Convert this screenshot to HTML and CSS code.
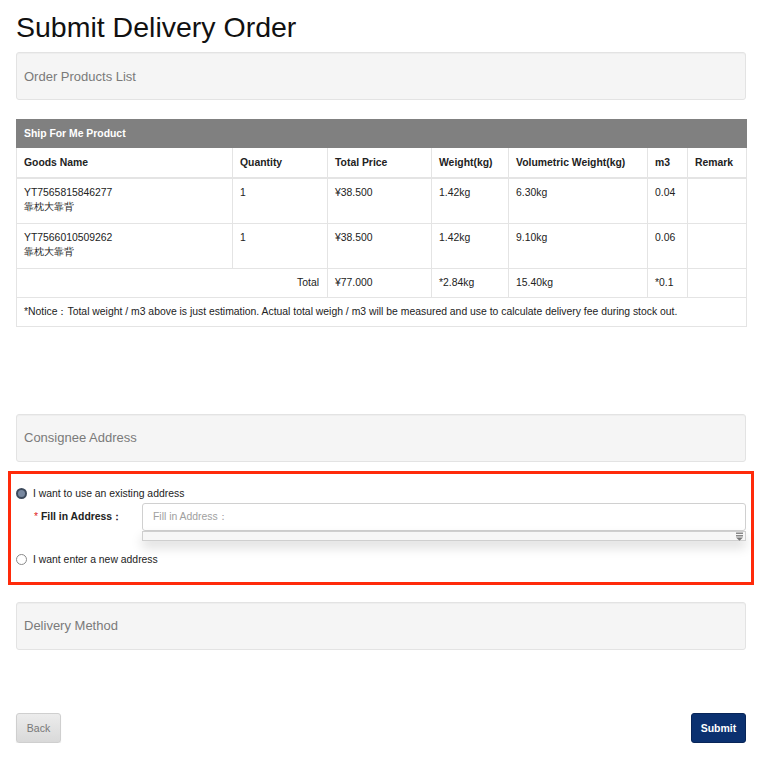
FILE: index.html
```html
<!DOCTYPE html>
<html>
<head>
<meta charset="utf-8">
<title>Submit Delivery Order</title>
<link rel="stylesheet" href="styles.css">
</head>
<body>
<div class="page">
  <h1 class="title">Submit Delivery Order</h1>

  <div class="panel"><span class="panel-title">Order Products List</span></div>

  <table class="products">
    <colgroup>
      <col class="c1"><col class="c2"><col class="c3"><col class="c4"><col class="c5"><col class="c6"><col class="c7">
    </colgroup>
    <thead>
      <tr class="caption-row"><th colspan="7">Ship For Me Product</th></tr>
      <tr class="head-row">
        <th>Goods Name</th><th>Quantity</th><th>Total Price</th><th>Weight(kg)</th><th>Volumetric Weight(kg)</th><th>m3</th><th>Remark</th>
      </tr>
    </thead>
    <tbody>
      <tr class="item-row">
        <td>YT7565815846277<br>靠枕大靠背</td><td>1</td><td>¥38.500</td><td>1.42kg</td><td>6.30kg</td><td>0.04</td><td></td>
      </tr>
      <tr class="item-row">
        <td>YT7566010509262<br>靠枕大靠背</td><td>1</td><td>¥38.500</td><td>1.42kg</td><td>9.10kg</td><td>0.06</td><td></td>
      </tr>
      <tr class="total-row">
        <td colspan="2" class="total-label">Total</td><td>¥77.000</td><td>*2.84kg</td><td>15.40kg</td><td>*0.1</td><td></td>
      </tr>
      <tr class="notice-row">
        <td colspan="7">*Notice：Total weight / m3 above is just estimation. Actual total weigh / m3 will be measured and use to calculate delivery fee during stock out.</td>
      </tr>
    </tbody>
  </table>

  <div class="panel panel-consignee"><span class="panel-title">Consignee Address</span></div>

  <div class="address-box">
    <label class="radio-line">
      <span class="radio checked"></span>
      <span>I want to use an existing address</span>
    </label>
    <div class="field">
      <span class="field-label"><span class="req">*</span> Fill in Address：</span>
      <div class="field-input">
        <div class="input">Fill in Address：</div>
        <div class="dropdown">
          <svg class="dd-arrow" width="9" height="9" viewBox="0 0 9 9"><rect x="1" y="0.5" width="7" height="1.5" fill="#888"/><rect x="1" y="3" width="7" height="1.5" fill="#888"/><path d="M1 5.5 H8 L4.5 8.8 Z" fill="#777"/></svg>
        </div>
      </div>
    </div>
    <label class="radio-line radio-new">
      <span class="radio"></span>
      <span>I want enter a new address</span>
    </label>
  </div>

  <div class="panel panel-delivery"><span class="panel-title">Delivery Method</span></div>

  <div class="actions">
    <button class="btn btn-back">Back</button>
    <button class="btn btn-submit">Submit</button>
  </div>
</div>
</body>
</html>
```

FILE: styles.css
```css
html, body {
  margin: 0;
  padding: 0;
  background: #fff;
}
body {
  font-family: "Liberation Sans", Arial, sans-serif;
  color: #222;
}
.page {
  width: 730px;
  padding: 0 0 0 16px;
}
.title {
  font-size: 28.5px;
  font-weight: normal;
  margin: 0;
  padding-top: 9px;
  line-height: 36px;
  height: 43px;
  color: #111;
}
.panel {
  box-sizing: border-box;
  height: 48px;
  background: #f5f5f5;
  border: 1px solid #e3e3e3;
  border-radius: 3px;
  display: flex;
  align-items: center;
  padding-left: 7px;
  box-shadow: inset 0 1px 1px rgba(0,0,0,0.03);
}
.panel-title {
  font-size: 13px;
  color: #7a7a7a;
}
.products {
  margin-top: 19px;
  width: 730px;
  border-collapse: collapse;
  table-layout: fixed;
  font-size: 10.4px;
  color: #222;
}
.c1 { width: 216px; }
.c2 { width: 95px; }
.c3 { width: 104px; }
.c4 { width: 77px; }
.c5 { width: 139px; }
.c6 { width: 40px; }
.c7 { width: 59px; }
.products th, .products td {
  border: 1px solid #e4e4e4;
  padding: 0 7px;
  text-align: left;
  vertical-align: top;
}
.caption-row th {
  background: #808080;
  color: #fff;
  height: 27px;
  vertical-align: middle;
  font-weight: bold;
  border-color: #808080;
}
.head-row th {
  height: 29px;
  vertical-align: middle;
  font-weight: bold;
  border-bottom-width: 2px;
}
.item-row td {
  height: 45px;
  box-sizing: border-box;
  padding-top: 7px;
  line-height: 14px;
}
.total-row td {
  height: 28px;
  vertical-align: middle;
}
.total-row .total-label {
  text-align: right;
  padding-right: 8px;
}
.notice-row td {
  height: 28px;
  vertical-align: middle;
}
.panel-consignee {
  margin-top: 87px;
  height: 48px;
}
.address-box {
  margin: 9px -8px 0 -8px;
  border: 3px solid #ff2a0a;
  padding: 13px 5px 15px 5px;
  font-size: 10.4px;
  color: #222;
}
.radio-line {
  display: flex;
  align-items: center;
  gap: 6px;
  height: 14px;
}
.radio {
  box-sizing: border-box;
  width: 11px;
  height: 11px;
  border-radius: 50%;
  border: 1px solid #8a8a8a;
  background: #fff;
}
.radio.checked {
  border: 2px solid #3d4a5c;
  background: #7888a0;
}
.field {
  display: flex;
  margin-top: 2px;
  height: 46px;
}
.field-label {
  width: 108px;
  padding-left: 18px;
  padding-top: 7px;
  font-weight: bold;
  color: #222;
  box-sizing: border-box;
  flex: none;
}
.req {
  color: #e02020;
  font-weight: normal;
}
.field-input {
  position: relative;
  flex: 1;
  margin-left: 18px;
}
.input {
  box-sizing: border-box;
  height: 28px;
  border: 1px solid #d0d0d0;
  border-radius: 3px;
  color: #a0a0a0;
  padding-left: 10px;
  line-height: 26px;
  background: #fff;
}
.dropdown {
  position: absolute;
  left: 0;
  right: 0;
  top: 28px;
  height: 10px;
  box-sizing: border-box;
  border: 1px solid #cfcfcf;
  background: #f7f7f7;
  box-shadow: 0 6px 12px rgba(0,0,0,0.15);
}
.dd-arrow {
  position: absolute;
  right: 1px;
  top: 0;
}
.radio-new {
  margin-top: 4px;
}
.panel-delivery {
  margin-top: 17px;
}
.actions {
  display: flex;
  justify-content: space-between;
  margin-top: 63px;
}
.btn {
  font-family: "Liberation Sans", Arial, sans-serif;
  font-size: 10.5px;
  height: 30px;
  border-radius: 3px;
  cursor: pointer;
}
.btn-back {
  width: 45px;
  color: #777;
  background: linear-gradient(#ececec, #d9d9d9);
  border: 1px solid #cfcfcf;
  box-shadow: 0 1px 1px rgba(0,0,0,0.1);
}
.btn-submit {
  width: 55px;
  color: #fff;
  background: #0b3170;
  border: 1px solid #082558;
  font-weight: bold;
}
```
